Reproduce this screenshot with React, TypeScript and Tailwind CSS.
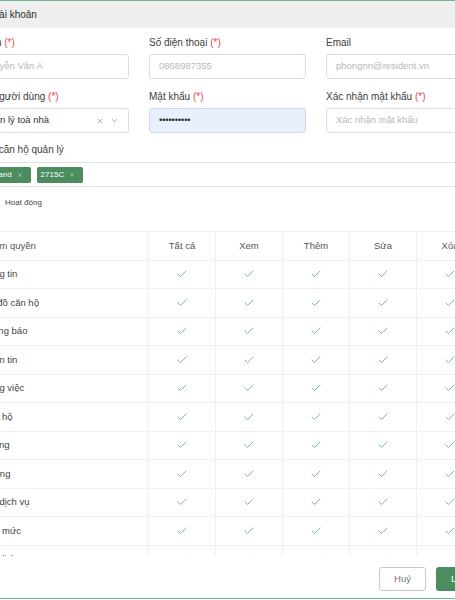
import { Check, X, ChevronDown } from "lucide-react";

const font = { fontFamily: '"Liberation Sans", Arial, sans-serif' };

const rows = [
  "Đăng tin",
  "Sơ đồ căn hộ",
  "Thông báo",
  "Nhắn tin",
  "Công việc",
  "Căn hộ",
  "Phòng",
  "Lương",
  "Gói dịch vụ",
  "Hạn mức",
  "Phí dịch vụ",
];

const cols = ["Tất cả", "Xem", "Thêm", "Sửa", "Xóa"];

function Label({ text, req }: { text: string; req?: boolean }) {
  return (
    <div className="mb-[5px] h-[12px] whitespace-nowrap text-[10px] leading-[12px] text-[#3d3d3d]">
      {text} {req ? <span className="text-[#e5484d]">(*)</span> : null}
    </div>
  );
}

function Field({ placeholder }: { placeholder: string }) {
  return (
    <div className="flex h-[25px] items-center overflow-hidden whitespace-nowrap rounded-[3px] border border-[#dedede] bg-white px-[9px] text-[9.5px] text-[#b8b8b8]">
      {placeholder}
    </div>
  );
}

function Tag({ text }: { text: string }) {
  return (
    <span className="flex h-[16px] items-center whitespace-nowrap rounded-[2px] bg-[#4b8d5e] pl-[4px] pr-[8px] text-[8px] text-white">
      {text}
      <X size={6} strokeWidth={2} className="ml-[5px] opacity-80" />
    </span>
  );
}

export default function App() {
  return (
    <div className="h-[600px] w-[455px] overflow-hidden bg-white" style={font}>
      <div className="-ml-[40px] flex h-[599px] w-[535px] flex-col border-y border-[#74b98f]">
        <div className="flex h-[27px] shrink-0 items-center bg-[#eeeeee] px-[8px] text-[10px] font-medium text-[#2f2f2f]">
          Thêm tài khoản
        </div>

        <div className="flex-1 overflow-hidden px-[12px] pt-[9px]">
          <div className="grid grid-cols-3 gap-x-[20px]">
            <div>
              <Label text="Họ tên" req />
              <Field placeholder="Nguyễn Văn A" />
            </div>
            <div>
              <Label text="Số điện thoại" req />
              <Field placeholder="0868987355" />
            </div>
            <div>
              <Label text="Email" />
              <Field placeholder="phongnn@resident.vn" />
            </div>
          </div>

          <div className="mt-[12px] grid grid-cols-3 gap-x-[20px]">
            <div>
              <Label text="Loại người dùng" req />
              <div className="flex h-[25px] items-center rounded-[3px] border border-[#dedede] bg-white px-[9px] text-[9.5px] text-[#333]">
                <span className="flex-1 whitespace-nowrap">Quản lý toà nhà</span>
                <X size={8} strokeWidth={1.6} className="text-[#777]" />
                <ChevronDown size={9} strokeWidth={1.6} className="ml-[6px] text-[#777]" />
              </div>
            </div>
            <div>
              <Label text="Mật khẩu" req />
              <div className="flex h-[25px] items-center rounded-[3px] border border-[#cdd8ee] bg-[#e8f0fe] px-[9px] text-[9px] text-[#222]">
                ••••••••••
              </div>
            </div>
            <div>
              <Label text="Xác nhận mật khẩu" req />
              <Field placeholder="Xác nhận mật khẩu" />
            </div>
          </div>

          <div className="mt-[11px]">
            <div className="mb-[6px] h-[12px] whitespace-nowrap text-[10px] leading-[12px] text-[#3d3d3d]">
              Chọn căn hộ quản lý
            </div>
            <div className="flex h-[25px] items-center gap-[6px] rounded-[3px] border border-[#e3e3e3] px-[3px]">
              <Tag text="Highland" />
              <Tag text="2715C" />
            </div>
          </div>

          <div className="mt-[8px] flex h-[16px] items-center gap-[5px]">
            <span className="flex h-[16px] w-[28px] items-center justify-end rounded-full bg-[#5f9e70] pr-[2px]">
              <span className="h-[12px] w-[12px] rounded-full bg-white" />
            </span>
            <span className="text-[8px] text-[#444]">Hoạt động</span>
          </div>

          <div className="mt-[20px] border-t border-[#eef0f3] text-[9.5px]">
            <div className="grid h-[28.5px] grid-cols-[176px_repeat(5,67px)] border-b border-[#eef0f3] text-[#555]">
              <div className="flex items-center whitespace-nowrap pl-[10px]">Nhóm quyền</div>
              {cols.map((c) => (
                <div key={c} className="flex items-center justify-center border-l border-[#eef0f3]">
                  {c}
                </div>
              ))}
            </div>
            {rows.map((r) => (
              <div
                key={r}
                className="grid h-[28.5px] grid-cols-[176px_repeat(5,67px)] border-b border-[#eef0f3] text-[#444]"
              >
                <div className="flex items-center whitespace-nowrap pl-[10px]">{r}</div>
                {cols.map((c) => (
                  <div key={c} className="flex items-center justify-center border-l border-[#eef0f3]">
                    <Check size={12} strokeWidth={1.5} className="text-[#5aa469]" />
                  </div>
                ))}
              </div>
            ))}
          </div>
        </div>

        <div className="flex h-[42px] shrink-0 items-start justify-end gap-[10px] px-[12px] pt-[11px]">
          <button className="h-[24px] w-[47px] rounded-[3px] border border-[#c8c8c8] bg-white text-[9.5px] text-[#777]">
            Huỷ
          </button>
          <button className="h-[24px] w-[47px] rounded-[3px] bg-[#4b8d5e] text-[9.5px] text-white">
            Lưu
          </button>
        </div>
      </div>
    </div>
  );
}
